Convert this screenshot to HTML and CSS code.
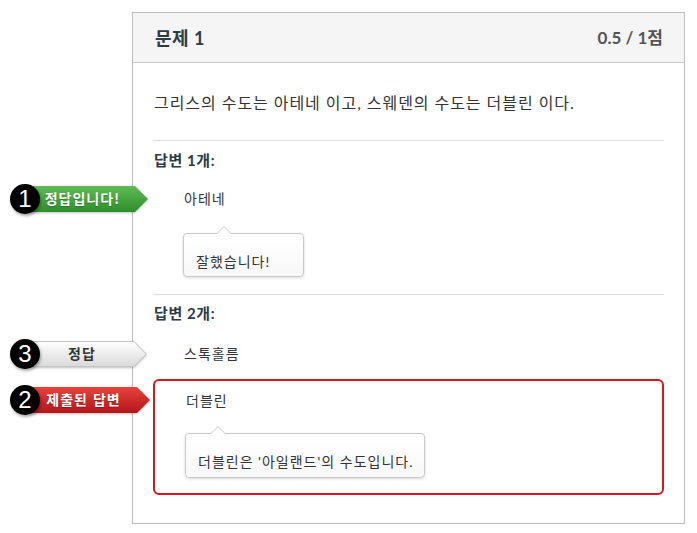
FILE: index.html
```html
<!DOCTYPE html>
<html lang="ko">
<head>
<meta charset="utf-8">
<title>문제 1</title>
<link rel="stylesheet" href="styles.css">
</head>
<body>
<section class="panel">
  <header class="panel-header">
    <h2 class="title">문제 1</h2>
    <span class="score">0.5 / 1점</span>
  </header>
  <div class="panel-body">
    <p class="question">그리스의 수도는 아테네 이고, 스웨덴의 수도는 더블린 이다.</p>

    <div class="group group-1">
      <h3 class="group-title">답변 1개:</h3>
      <div class="answer-row">
        <div class="badge">
          <span class="num">1</span>
          <span class="flag flag-green">
            <svg viewBox="0 0 118 26" preserveAspectRatio="none"><defs><linearGradient id="gg" x1="0" y1="0" x2="0" y2="1"><stop offset="0" stop-color="#5fbb55"/><stop offset="1" stop-color="#2f8e2c"/></linearGradient></defs><polygon points="0,0 105,0 118,13 105,26 0,26" fill="url(#gg)"/></svg>
            <span class="flag-text">정답입니다!</span>
          </span>
        </div>
        아테네
      </div>
      <div class="tip tip-1">잘했습니다!</div>
    </div>

    <div class="group group-2">
      <h3 class="group-title">답변 2개:</h3>
      <div class="answer-row answer-row-2">
        <div class="badge">
          <span class="num">3</span>
          <span class="flag flag-grey">
            <svg viewBox="0 0 117 26" preserveAspectRatio="none"><defs><linearGradient id="gw" x1="0" y1="0" x2="0" y2="1"><stop offset="0" stop-color="#ffffff"/><stop offset="1" stop-color="#dadada"/></linearGradient></defs><polygon points="0.5,0.5 104,0.5 116.3,13 104,25.5 0.5,25.5" fill="url(#gw)" stroke="#c4c4c4"/></svg>
            <span class="flag-text">정답</span>
          </span>
        </div>
        스톡홀름
      </div>
      <div class="selected">
        <div class="answer-row answer-row-sel">
          <div class="badge badge-sel">
            <span class="num">2</span>
            <span class="flag flag-red">
              <svg viewBox="0 0 120 26" preserveAspectRatio="none"><defs><linearGradient id="gr" x1="0" y1="0" x2="0" y2="1"><stop offset="0" stop-color="#e8423c"/><stop offset="1" stop-color="#b3161b"/></linearGradient></defs><polygon points="0,0 107,0 120,13 107,26 0,26" fill="url(#gr)"/></svg>
              <span class="flag-text">제출된 답변</span>
            </span>
          </div>
          더블린
        </div>
        <div class="tip tip-2">더블린은 '아일랜드'의 수도입니다.</div>
      </div>
    </div>
  </div>
</section>
</body>
</html>
```
FILE: styles.css
```css
body {
  margin: 0;
  background: #ffffff;
  font-family: Lato, "Noto Sans CJK KR", sans-serif;
  color: #333333;
}

.panel {
  margin: 12px 0 0 132px;
  width: 553px;
  box-sizing: border-box;
  border: 1px solid #bdbdbd;
}

.panel-header {
  height: 50px;
  box-sizing: border-box;
  background: #f5f5f5;
  border-bottom: 1px solid #c8c8c8;
  display: flex;
  align-items: center;
  justify-content: space-between;
  padding: 0 21px 0 22px;
}

.title {
  margin: 0;
  font-size: 18px;
  font-weight: 700;
  line-height: 24px;
  letter-spacing: 0.5px;
  color: #2d3b45;
}

.score {
  font-size: 17px;
  font-weight: 700;
  line-height: 24px;
  color: #555555;
}

.panel-body {
  padding: 0 20px 28px;
}

.question {
  margin: 0;
  padding: 28px 0 25px 1px;
  font-size: 16px;
  line-height: 24px;
  letter-spacing: 0.95px;
  border-bottom: 1px solid #dddddd;
}

.group-1 {
  padding: 9px 0 17px;
  border-bottom: 1px solid #dddddd;
}

.group-2 {
  padding-top: 8px;
}

.group-title {
  margin: 0;
  padding-left: 1px;
  font-size: 15px;
  font-weight: 700;
  line-height: 20px;
  letter-spacing: 0.6px;
  color: #2d3b45;
}

.answer-row {
  position: relative;
  margin-top: 19px;
  padding-left: 31px;
  font-size: 14px;
  line-height: 20px;
  letter-spacing: 1px;
  color: #333333;
}

.answer-row-2 {
  margin-top: 21px;
}

.answer-row-sel {
  margin-top: 0;
}

.selected {
  position: relative;
  margin-top: 15px;
  border: 2px solid #d9161c;
  border-radius: 6px;
  padding: 10px 0 15px;
}

/* badges */
.badge {
  position: absolute;
  top: -5px;
  left: -143px;
  display: flex;
  align-items: center;
  letter-spacing: 0;
}

.badge-sel {
  left: -145px;
  top: -6px;
}

.num {
  position: relative;
  z-index: 1;
  width: 30px;
  height: 30px;
  border-radius: 50%;
  background: #000000;
  color: #ffffff;
  font-family: "Liberation Sans", Arial, sans-serif;
  font-size: 24px;
  line-height: 30px;
  text-align: center;
  box-shadow: 1px 2px 3px rgba(0, 0, 0, 0.35);
}

.flag {
  position: relative;
  display: block;
  width: 118px;
  height: 26px;
  margin-left: -10px;
}

.flag-grey {
  width: 117px;
}

.flag-red {
  width: 120px;
}

.flag svg {
  position: absolute;
  left: 0;
  top: 0;
  width: 100%;
  height: 100%;
  filter: drop-shadow(0 1px 1px rgba(0, 0, 0, 0.25));
}

.flag-text {
  position: relative;
  display: block;
  padding-right: 13px;
  text-align: center;
  font-family: "Noto Sans CJK KR", sans-serif;
  font-size: 14px;
  font-weight: 700;
  line-height: 25px;
  letter-spacing: 1px;
  color: #ffffff;
  text-shadow: 0 1px 1px rgba(0, 0, 0, 0.25);
}

.flag-grey .flag-text {
  color: #333333;
  text-shadow: none;
}

/* tooltips */
.tip {
  position: relative;
  width: fit-content;
  min-width: 121px;
  box-sizing: border-box;
  margin: 24px 0 0 30px;
  padding: 18px 12px 4px;
  border: 1px solid #c9c9c9;
  border-radius: 4px;
  background: linear-gradient(#ffffff, #f8f8f8);
  box-shadow: 0 1px 3px rgba(0, 0, 0, 0.15);
  font-size: 14px;
  line-height: 20px;
  letter-spacing: 1px;
  color: #333333;
}

.tip-2 {
  margin-top: 22px;
  padding: 18px 10px 5px 12px;
}

.tip::before,
.tip::after {
  content: "";
  position: absolute;
  border-style: solid;
  border-color: transparent;
  border-top-width: 0;
}

.tip::before {
  top: -8px;
  left: 32px;
  border-width: 0 8px 8px;
  border-bottom-color: #c9c9c9;
}

.tip::after {
  top: -7px;
  left: 33px;
  border-width: 0 7px 7px;
  border-bottom-color: #ffffff;
}

.tip-2::before {
  left: 24px;
}

.tip-2::after {
  left: 25px;
}
```
